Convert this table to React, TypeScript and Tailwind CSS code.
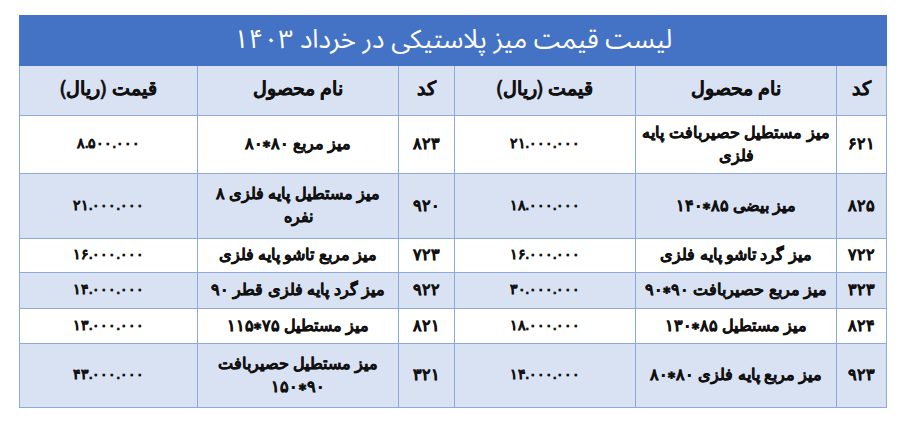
import React from "react";

type Item = { code: string; name: React.ReactNode; price: string };

const rows: { h: string; bg: string; right: Item; left: Item }[] = [
  {
    h: "h-[58px]",
    bg: "bg-white",
    right: { code: "۶۲۱", name: <>میز مستطیل حصیربافت پایه<br />فلزی</>, price: "۲۱.۰۰۰.۰۰۰" },
    left: { code: "۸۲۳", name: "میز مربع ۸۰∗۸۰", price: "۸.۵۰۰.۰۰۰" },
  },
  {
    h: "h-[65px]",
    bg: "bg-[#d9e2f3]",
    right: { code: "۸۲۵", name: "میز بیضی ۸۵∗۱۴۰", price: "۱۸.۰۰۰.۰۰۰" },
    left: { code: "۹۲۰", name: <>میز مستطیل پایه فلزی ۸<br />نفره</>, price: "۲۱.۰۰۰.۰۰۰" },
  },
  {
    h: "h-[34px]",
    bg: "bg-white",
    right: { code: "۷۲۲", name: "میز گرد تاشو پایه فلزی", price: "۱۶.۰۰۰.۰۰۰" },
    left: { code: "۷۲۳", name: "میز مربع تاشو پایه فلزی", price: "۱۶.۰۰۰.۰۰۰" },
  },
  {
    h: "h-[36px]",
    bg: "bg-[#d9e2f3]",
    right: { code: "۳۲۳", name: "میز مربع حصیربافت ۹۰∗۹۰", price: "۳۰.۰۰۰.۰۰۰" },
    left: { code: "۹۲۲", name: "میز گرد پایه فلزی قطر ۹۰", price: "۱۴.۰۰۰.۰۰۰" },
  },
  {
    h: "h-[35px]",
    bg: "bg-white",
    right: { code: "۸۲۴", name: "میز مستطیل ۸۵∗۱۳۰", price: "۱۸.۰۰۰.۰۰۰" },
    left: { code: "۸۲۱", name: "میز مستطیل ۷۵∗۱۱۵", price: "۱۳.۰۰۰.۰۰۰" },
  },
  {
    h: "h-[64px]",
    bg: "bg-[#d9e2f3]",
    right: { code: "۹۲۳", name: "میز مربع پایه فلزی ۸۰∗۸۰", price: "۱۴.۰۰۰.۰۰۰" },
    left: { code: "۳۲۱", name: <>میز مستطیل حصیربافت<br />۹۰∗۱۵۰</>, price: "۴۳.۰۰۰.۰۰۰" },
  },
];

const cell = "border border-[#8eaadb] text-center align-middle p-0 whitespace-nowrap";

export default function App() {
  return (
    <div className="w-[905px] h-[425px] bg-white pt-[15px] pl-[19px] font-['FreeSans',sans-serif]">
      <table dir="rtl" className="w-[867px] table-fixed border-collapse text-[#111]">
        <colgroup>
          <col className="w-[50px]" />
          <col className="w-[201px]" />
          <col className="w-[181px]" />
          <col className="w-[56px]" />
          <col className="w-[201px]" />
          <col className="w-[178px]" />
        </colgroup>
        <thead>
          <tr className="h-[50px] bg-[#4472c4]">
            <th
              colSpan={6}
              className="border border-[#4472c4] text-center align-middle text-white font-normal text-[26px] p-0 pb-[2px] font-['Noto_Sans_Arabic',sans-serif]"
            >
              لیست قیمت میز پلاستیکی در خرداد ۱۴۰۳
            </th>
          </tr>
          <tr className="h-[50px] bg-[#d9e2f3] text-[19px] font-bold [-webkit-text-stroke:0.3px_#111]">
            <th className={cell}>کد</th>
            <th className={cell}>نام محصول</th>
            <th className={cell}>قیمت (ریال)</th>
            <th className={cell}>کد</th>
            <th className={cell}>نام محصول</th>
            <th className={cell}>قیمت (ریال)</th>
          </tr>
        </thead>
        <tbody className="text-[16px] font-bold leading-[23px] [-webkit-text-stroke:0.3px_#111]">
          {rows.map((r, i) => (
            <tr key={i} className={`${r.h} ${r.bg}`}>
              <td className={cell}>{r.right.code}</td>
              <td className={cell}>{r.right.name}</td>
              <td className={`${cell} text-[14px]`}>{r.right.price}</td>
              <td className={cell}>{r.left.code}</td>
              <td className={cell}>{r.left.name}</td>
              <td className={`${cell} text-[14px]`}>{r.left.price}</td>
            </tr>
          ))}
        </tbody>
      </table>
    </div>
  );
}
